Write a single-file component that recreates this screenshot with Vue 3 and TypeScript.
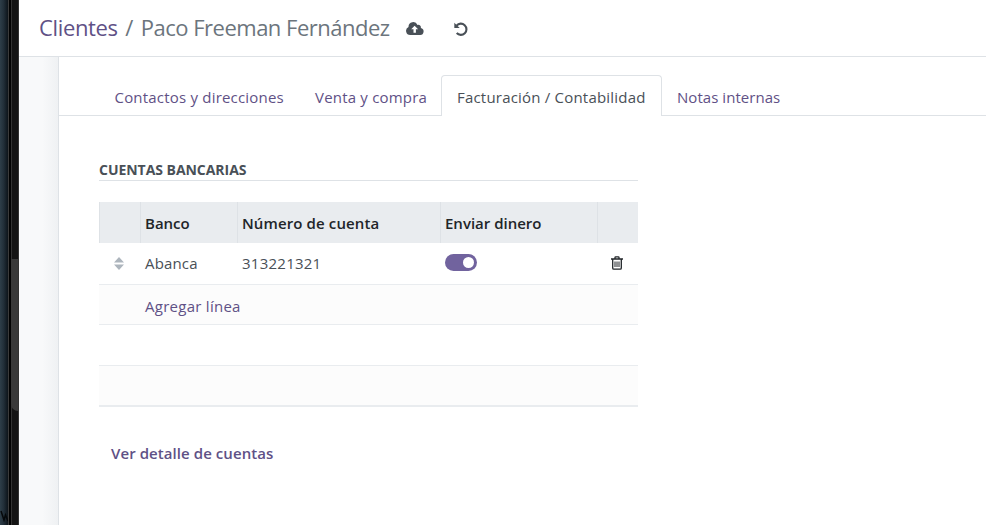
<script setup lang="ts">
interface Tab { id: string; label: string }
interface Account { bank: string; number: string; sendMoney: boolean }

const tabs: Tab[] = [
  { id: 'contacts', label: 'Contactos y direcciones' },
  { id: 'sales', label: 'Venta y compra' },
  { id: 'accounting', label: 'Facturación / Contabilidad' },
  { id: 'notes', label: 'Notas internas' },
]
const activeTab = 'accounting'
const accounts: Account[] = [{ bank: 'Abanca', number: '313221321', sendMoney: true }]
</script>

<template>
  <div class="screen">
    <aside class="edge">
      <div class="edge-desktop">
        <svg class="edge-mark" viewBox="0 0 8 12"><path fill="none" stroke="#05080a" stroke-width="1.500" d="M1 1L4 10L5.500 5L8 11" /></svg>
      </div>
      <div class="edge-gutter"></div>
      <div class="edge-track"><div class="edge-thumb"></div></div>
    </aside>
    <div class="window">
      <header class="topbar">
        <h1 class="crumbs">
          <a class="crumb-link">Clientes</a><span class="sep">/</span><span class="crumb-current">Paco Freeman Fernández</span>
        </h1>
        <svg class="icon-cloud" viewBox="0 0 18 13">
          <path fill="#495057" fill-rule="evenodd" d="M4.2 13A4.2 4.2 0 0 1 2.5 5V4.700A4.700 4.700 0 0 1 11.500 2.900A2.500 2.500 0 0 1 14.800 5.900A3.600 3.600 0 0 1 14.200 13ZM8.600 3.700L5.200 7.200H7.500V10.800H9.900V7.200H12.100Z" />
        </svg>
        <svg class="icon-undo" viewBox="0 0 14 14">
          <path fill="none" stroke="#495057" stroke-width="2.100" d="M2.600 3.600A5.600 5.600 0 1 1 2.700 11" />
          <path fill="#495057" d="M.3.700V6H5.700Z" />
        </svg>
      </header>
      <div class="body">
        <div class="margin"></div>
        <main class="sheet">
          <nav class="tabs">
            <a v-for="t in tabs" :key="t.id" class="tab" :class="[t.id, { active: t.id === activeTab }]"><span>{{ t.label }}</span></a>
          </nav>
          <section class="content">
            <h2 class="group-title"><span>CUENTAS BANCARIAS</span></h2>
            <div class="table">
              <div class="row head">
                <div></div>
                <div><span>Banco</span></div>
                <div><span class="h-number">Número de cuenta</span></div>
                <div><span>Enviar dinero</span></div>
                <div></div>
              </div>
              <div v-for="a in accounts" :key="a.number" class="row line">
                <div class="center">
                  <svg class="icon-sort" viewBox="0 0 10 13"><path fill="#adb5bd" d="M5 0L10 5.500H0ZM0 7.500H10L5 13Z" /></svg>
                </div>
                <div><span class="bank">{{ a.bank }}</span></div>
                <div><span class="number">{{ a.number }}</span></div>
                <div><span class="switch" :class="{ on: a.sendMoney }"></span></div>
                <div class="center">
                  <svg class="icon-trash" viewBox="0 0 12 14">
                    <g fill="none" stroke="#212529">
                      <path stroke-width="1.300" d="M0 3H12M4 2.800V1.500Q4 .8 4.700 .8H7.300Q8 .8 8 1.500V2.800M1.700 3.500V12Q1.700 13.200 2.800 13.200H9.200Q10.300 13.200 10.300 12V3.500" />
                      <path stroke-width="1" d="M4 5.500V11M6 5.500V11M8 5.500V11" />
                    </g>
                  </svg>
                </div>
              </div>
              <div class="filler add"><a>Agregar línea</a></div>
              <div class="filler blank"></div>
              <div class="filler last"></div>
            </div>
            <a class="detail">Ver detalle de cuentas</a>
          </section>
        </main>
      </div>
    </div>
  </div>
</template>

<style>
body { background: #fff; overflow: hidden; }
</style>

<style scoped>
.screen {
  display: flex; width: 986px; height: 525px; overflow: hidden; background: #fff;
  font-family: "Open Sans", "Noto Sans", sans-serif; font-size: 15px; color: #495057;
}
.screen * { box-sizing: border-box; }
.edge { display: flex; width: 19px; flex: none; background: #0b0b0b; }
.edge-desktop {
  width: 8px; display: flex; align-items: flex-end; overflow: hidden;
  background: linear-gradient(90deg, #2e3e49, #222f39 45%, #0d141a);
}
.edge-mark { width: 8px; height: 12px; margin-bottom: 3px; }
.edge-gutter { width: 3px; background: linear-gradient(90deg, #3c3c3c 1px, #020202 1px); }
.edge-track {
  width: 8px; padding-top: 259px; border-right: 1px solid #333;
  background: linear-gradient(90deg, #333 1px, #141414 1px);
}
.edge-thumb { height: 152px; background: #393939; border-bottom-left-radius: 7px; }
.window { flex: 1; min-width: 0; display: flex; flex-direction: column; }
.topbar { height: 57px; flex: none; display: flex; align-items: center; padding-left: 20px; border-bottom: 1px solid #dee2e6; }
.crumbs { display: flex; width: 367px; margin: 0 0 2px; font-size: 22px; font-weight: 400; line-height: 30px; white-space: nowrap; letter-spacing: -.5px; }
.crumb-link { color: #5f5186; letter-spacing: -.35px; }
.sep { color: #6c757d; margin: 0 8px 0 7.5px; }
.crumb-current { color: #6c757d; }
.icon-cloud { width: 18px; height: 13px; flex: none; margin-top: 1px; }
.icon-undo { width: 14px; height: 14px; flex: none; margin: 2px 0 0 30px; }
.body { flex: 1; display: flex; min-height: 0; }
.margin { width: 39px; flex: none; background: linear-gradient(90deg, #f8f9fa 60%, #eff1f3); }
.sheet { flex: 1; min-width: 0; border-left: 1px solid #dee2e6; }
.tabs { display: flex; height: 59px; padding: 18px 0 0 40px; border-bottom: 1px solid #dee2e6; }
.tab {
  height: 41px; padding: 0 0 0 15px; border: 1px solid transparent; border-bottom: 0;
  border-radius: 4px 4px 0 0; line-height: 43px; color: #5f5186; white-space: nowrap; letter-spacing: .2px;
}
.tab.active { background: #fff; border-color: #dee2e6; color: #495057; }
.tab.contacts { width: 200px; padding-left: 14.5px; }
.tab.sales { width: 142px; }
.tab.accounting { width: 221px; }
.tab.notes { padding-left: 14px; letter-spacing: .05px; }
.content { padding: 44px 0 0 40px; }
.group-title {
  width: 539px; height: 21px; margin: 0; border-bottom: 1px solid #dee2e6;
  font-size: 14px; line-height: 19px; font-weight: 700; color: #495057; letter-spacing: -.04px;
}
.table { width: 539px; margin-top: 21px; }
.row { display: grid; grid-template-columns: 41px 97px 203px 157px 41px; }
.row > div { display: flex; align-items: center; padding-left: 5px; white-space: nowrap; }
.row > div.center { justify-content: center; padding: 0; }
.head { height: 41px; background: #e9ecef; color: #212529; font-weight: 600; }
.row.head > div { border-left: 1px solid #dee2e6; padding-left: 4px; }
.h-number { letter-spacing: .12px; }
.bank { letter-spacing: .15px; }
.number { letter-spacing: .25px; }
.line { height: 42px; border-bottom: 1px solid #e9ecef; padding-bottom: 2px; }
.icon-sort { width: 10px; height: 13px; margin: 1px 1px 0 0; }
.icon-trash { width: 12px; height: 14px; margin-right: 1px; }
.switch { position: relative; width: 32px; height: 17px; border-radius: 9px; background: #ced4da; margin-bottom: 1px; }
.switch.on { background: #71639e; }
.switch::after { content: ""; position: absolute; top: 3px; right: 3px; width: 11px; height: 11px; border-radius: 50%; background: #fff; }
.filler { border-bottom: 1px solid #e9ecef; }
.add { height: 40px; background: #fcfcfc; padding-left: 46px; line-height: 43px; color: #5f5186; letter-spacing: .27px; }
.blank { height: 41px; }
.last { height: 41px; border-bottom-width: 2px; background: #fcfcfc; }
.detail { display: block; margin: 35px 0 0 12px; line-height: 22px; color: #5f5186; font-weight: 600; letter-spacing: .07px; }
</style>
